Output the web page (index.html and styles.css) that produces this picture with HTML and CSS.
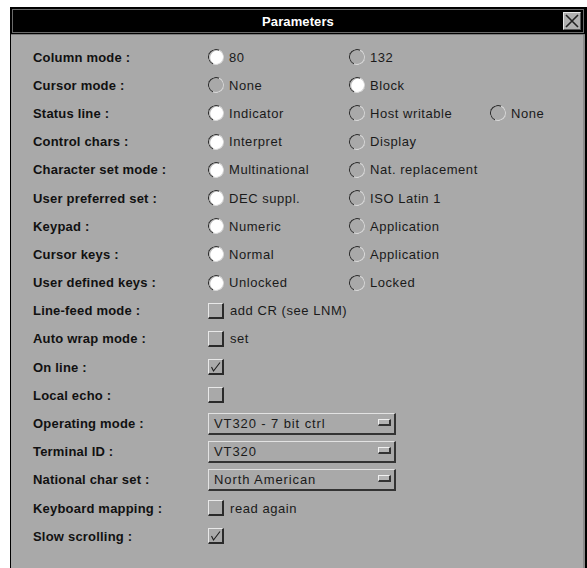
FILE: index.html
```html
<!DOCTYPE html>
<html>
<head>
<meta charset="utf-8">
<title>Parameters</title>
<link rel="stylesheet" href="styles.css">
</head>
<body>
<div class="window">
  <div class="titlebar">
    <span class="title">Parameters</span>
    <span class="close"><svg width="14" height="14" viewBox="0 0 14 14"><path d="M1 1 L13 13 M13 1 L1 13" stroke="#222" stroke-width="1.6"/></svg></span>
  </div>
  <div class="form">
    <div class="label">Column mode :</div>
    <div class="opt"><span class="radio on"></span>80</div>
    <div class="opt"><span class="radio"></span>132</div>
    <div class="opt"></div>

    <div class="label">Cursor mode :</div>
    <div class="opt"><span class="radio"></span>None</div>
    <div class="opt"><span class="radio on"></span>Block</div>
    <div class="opt"></div>

    <div class="label">Status line :</div>
    <div class="opt"><span class="radio on"></span>Indicator</div>
    <div class="opt"><span class="radio"></span>Host writable</div>
    <div class="opt"><span class="radio"></span>None</div>

    <div class="label">Control chars :</div>
    <div class="opt"><span class="radio on"></span>Interpret</div>
    <div class="opt"><span class="radio"></span>Display</div>
    <div class="opt"></div>

    <div class="label">Character set mode :</div>
    <div class="opt"><span class="radio on"></span>Multinational</div>
    <div class="opt"><span class="radio"></span>Nat. replacement</div>
    <div class="opt"></div>

    <div class="label">User preferred set :</div>
    <div class="opt"><span class="radio on"></span>DEC suppl.</div>
    <div class="opt"><span class="radio"></span>ISO Latin 1</div>
    <div class="opt"></div>

    <div class="label">Keypad :</div>
    <div class="opt"><span class="radio on"></span>Numeric</div>
    <div class="opt"><span class="radio"></span>Application</div>
    <div class="opt"></div>

    <div class="label">Cursor keys :</div>
    <div class="opt"><span class="radio on"></span>Normal</div>
    <div class="opt"><span class="radio"></span>Application</div>
    <div class="opt"></div>

    <div class="label">User defined keys :</div>
    <div class="opt"><span class="radio on"></span>Unlocked</div>
    <div class="opt"><span class="radio"></span>Locked</div>
    <div class="opt"></div>

    <div class="label">Line-feed mode :</div>
    <div class="opt wide"><span class="check"></span>add CR (see LNM)</div>

    <div class="label">Auto wrap mode :</div>
    <div class="opt wide"><span class="check"></span>set</div>

    <div class="label">On line :</div>
    <div class="opt wide"><span class="check"><svg width="13" height="13" viewBox="0 0 13 13"><path d="M2.5 7 L4.5 11 L11 2.5" fill="none" stroke="#1e1e1e" stroke-width="1.1"/></svg></span></div>

    <div class="label">Local echo :</div>
    <div class="opt wide"><span class="check"></span></div>

    <div class="label">Operating mode :</div>
    <div class="opt wide"><span class="menu">VT320 - 7 bit ctrl<span class="knob"></span></span></div>

    <div class="label">Terminal ID :</div>
    <div class="opt wide"><span class="menu">VT320<span class="knob"></span></span></div>

    <div class="label">National char set :</div>
    <div class="opt wide"><span class="menu">North American<span class="knob"></span></span></div>

    <div class="label">Keyboard mapping :</div>
    <div class="opt wide"><span class="check"></span>read again</div>

    <div class="label">Slow scrolling :</div>
    <div class="opt wide"><span class="check"><svg width="13" height="13" viewBox="0 0 13 13"><path d="M2.5 7 L4.5 11 L11 2.5" fill="none" stroke="#1e1e1e" stroke-width="1.1"/></svg></span></div>
  </div>
</div>
</body>
</html>
```

FILE: styles.css
```css
html, body {
  margin: 0;
  padding: 0;
  background: #ffffff;
  overflow: hidden;
}

body {
  font-family: "Liberation Sans", Arial, sans-serif;
  font-size: 13px;
  color: #111;
}

.window {
  margin: 7px 0 0 10px;
  width: 577px;
  height: 570px;
  box-sizing: border-box;
  background: #a9a9a9;
  border: 1px solid #000;
  border-right: 2px solid #000;
  box-shadow: inset -2px 0 0 #8a8a8a;
}

.titlebar {
  position: relative;
  height: 26px;
  box-sizing: border-box;
  background: #000;
  border: 1px solid #000;
  box-shadow: inset 0 0 0 1px #6a6a6a;
  display: flex;
  align-items: center;
  justify-content: center;
}

.title {
  color: #fff;
  font-weight: bold;
  font-size: 13px;
  letter-spacing: 0.1px;
}

.close {
  position: absolute;
  right: 3px;
  top: 3px;
  width: 18px;
  height: 18px;
  box-sizing: border-box;
  background: #b0b0b0;
  border-top: 1px solid #e6e6e6;
  border-left: 1px solid #e6e6e6;
  border-right: 1px solid #555;
  border-bottom: 1px solid #555;
  display: flex;
  align-items: center;
  justify-content: center;
}

.form {
  display: grid;
  grid-template-columns: 175px 141px 141px 1fr;
  grid-auto-rows: 28.2px;
  padding: 8px 0 0 22px;
  border-top: 1px solid #7a7a7a;
}

.label {
  font-weight: bold;
  letter-spacing: 0.2px;
  display: flex;
  align-items: center;
  color: #111;
}

.opt {
  display: flex;
  align-items: center;
  gap: 5px;
  letter-spacing: 0.55px;
  color: #1a1a1a;
}

.opt.wide {
  grid-column: 2 / 5;
  gap: 6px;
}

.radio {
  width: 16px;
  height: 16px;
  box-sizing: border-box;
  border-radius: 50%;
  border-style: solid;
  border-width: 1.6px;
  border-color: #2e2e2e #d8d8d8 #d8d8d8 #2e2e2e;
  transform: rotate(-20deg);
  background: transparent;
  flex: none;
}

.radio.on {
  background: #ffffff;
  box-shadow: inset 1px 1px 0 #bbb;
}

.check {
  width: 16px;
  height: 16px;
  box-sizing: border-box;
  border-top: 1px solid #e8e8e8;
  border-left: 1px solid #e8e8e8;
  border-right: 2px solid #2a2a2a;
  border-bottom: 2px solid #2a2a2a;
  flex: none;
  display: flex;
}

.check svg {
  display: block;
}

.menu {
  position: relative;
  width: 188px;
  height: 22px;
  box-sizing: border-box;
  display: flex;
  align-items: center;
  padding-left: 5px;
  border-top: 1px solid #e2e2e2;
  border-left: 1px solid #e2e2e2;
  border-right: 2px solid #333;
  border-bottom: 2px solid #333;
  color: #1a1a1a;
  letter-spacing: 0.9px;
}

.knob {
  position: absolute;
  right: 3px;
  top: 5px;
  width: 13px;
  height: 7px;
  box-sizing: border-box;
  background: #b4b4b4;
  border-top: 1px solid #f0f0f0;
  border-left: 1px solid #f0f0f0;
  border-right: 2px solid #333;
  border-bottom: 2px solid #333;
}
```
